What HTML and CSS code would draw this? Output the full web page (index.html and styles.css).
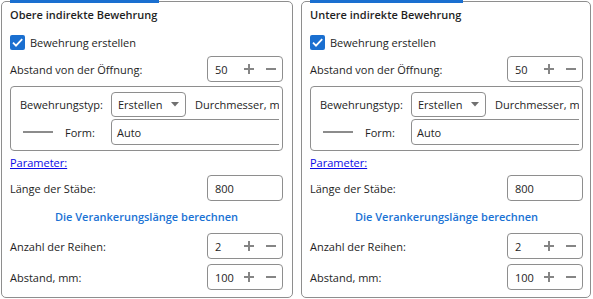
FILE: index.html
```html
<!DOCTYPE html>
<html lang="de">
<head>
<meta charset="utf-8">
<link rel="stylesheet" href="styles.css">
</head>
<body>
<div class="page">
  <section class="panel panel-left">
    <div class="title">Obere indirekte Bewehrung</div>
    <label class="check-row"><span class="checkbox"><svg width="15" height="15" viewBox="0 0 15 15"><path d="M3 7.6 6 10.6 12.2 4.2" fill="none" stroke="#fff" stroke-width="1.8"/></svg></span>Bewehrung erstellen</label>
    <div class="row"><span>Abstand von der Öffnung:</span><div class="spin"><span class="val">50</span><svg class="ico" width="10" height="10" viewBox="0 0 10 10"><path d="M5 0V10M0 5H10" stroke="#858585" stroke-width="2"/></svg><svg class="ico minus" width="10" height="10" viewBox="0 0 10 10"><path d="M0 5H10" stroke="#858585" stroke-width="2"/></svg></div></div>
    <div class="group">
      <div class="group-clip">
        <div class="grid">
          <span class="glabel">Bewehrungstyp:</span>
          <div class="select"><span>Erstellen</span><svg width="8" height="5" viewBox="0 0 8 5"><path d="M0 0H8L4 4.5Z" fill="#707070"/></svg></div>
          <span class="extra">Durchmesser, mm</span>
          <div class="form-label"><span class="line"></span><span>Form:</span></div>
          <div class="form-field">Auto</div>
        </div>
      </div>
    </div>
    <a class="link" href="#">Parameter:</a>
    <div class="row"><span>Länge der Stäbe:</span><div class="field">800</div></div>
    <div class="action">Die Verankerungslänge berechnen</div>
    <div class="row"><span>Anzahl der Reihen:</span><div class="spin"><span class="val">2</span><svg class="ico" width="10" height="10" viewBox="0 0 10 10"><path d="M5 0V10M0 5H10" stroke="#858585" stroke-width="2"/></svg><svg class="ico minus" width="10" height="10" viewBox="0 0 10 10"><path d="M0 5H10" stroke="#858585" stroke-width="2"/></svg></div></div>
    <div class="row row-last"><span>Abstand, mm:</span><div class="spin"><span class="val">100</span><svg class="ico" width="10" height="10" viewBox="0 0 10 10"><path d="M5 0V10M0 5H10" stroke="#858585" stroke-width="2"/></svg><svg class="ico minus" width="10" height="10" viewBox="0 0 10 10"><path d="M0 5H10" stroke="#858585" stroke-width="2"/></svg></div></div>
  </section>
  <section class="panel panel-right">
    <div class="title">Untere indirekte Bewehrung</div>
    <label class="check-row"><span class="checkbox"><svg width="15" height="15" viewBox="0 0 15 15"><path d="M3 7.6 6 10.6 12.2 4.2" fill="none" stroke="#fff" stroke-width="1.8"/></svg></span>Bewehrung erstellen</label>
    <div class="row"><span>Abstand von der Öffnung:</span><div class="spin"><span class="val">50</span><svg class="ico" width="10" height="10" viewBox="0 0 10 10"><path d="M5 0V10M0 5H10" stroke="#858585" stroke-width="2"/></svg><svg class="ico minus" width="10" height="10" viewBox="0 0 10 10"><path d="M0 5H10" stroke="#858585" stroke-width="2"/></svg></div></div>
    <div class="group">
      <div class="group-clip">
        <div class="grid">
          <span class="glabel">Bewehrungstyp:</span>
          <div class="select"><span>Erstellen</span><svg width="8" height="5" viewBox="0 0 8 5"><path d="M0 0H8L4 4.5Z" fill="#707070"/></svg></div>
          <span class="extra">Durchmesser, mm</span>
          <div class="form-label"><span class="line"></span><span>Form:</span></div>
          <div class="form-field">Auto</div>
        </div>
      </div>
    </div>
    <a class="link" href="#">Parameter:</a>
    <div class="row"><span>Länge der Stäbe:</span><div class="field">800</div></div>
    <div class="action">Die Verankerungslänge berechnen</div>
    <div class="row"><span>Anzahl der Reihen:</span><div class="spin"><span class="val">2</span><svg class="ico" width="10" height="10" viewBox="0 0 10 10"><path d="M5 0V10M0 5H10" stroke="#858585" stroke-width="2"/></svg><svg class="ico minus" width="10" height="10" viewBox="0 0 10 10"><path d="M0 5H10" stroke="#858585" stroke-width="2"/></svg></div></div>
    <div class="row row-last"><span>Abstand, mm:</span><div class="spin"><span class="val">100</span><svg class="ico" width="10" height="10" viewBox="0 0 10 10"><path d="M5 0V10M0 5H10" stroke="#858585" stroke-width="2"/></svg><svg class="ico minus" width="10" height="10" viewBox="0 0 10 10"><path d="M0 5H10" stroke="#858585" stroke-width="2"/></svg></div></div>
  </section>
</div>
</body>
</html>
```
FILE: styles.css
```css
* { box-sizing: border-box; }
html, body { background: #fff; }
body {
  margin: 0;
  padding: 1px 0 0 1px;
  font-family: "Open Sans", "Noto Sans", sans-serif;
  font-size: 11px;
  color: #1e1e1e;
}
.page { display: flex; gap: 8px; }
.panel {
  height: 297px;
  border: 1px solid #8e8e8e;
  border-radius: 5px;
  padding: 0 0 0 8px;
  display: flex;
  flex-direction: column;
  align-items: flex-start;
}
.panel-left { width: 292px; }
.panel-right { width: 290px; }
.panel > * { width: 273px; }

.title {
  position: relative;
  width: auto;
  height: 26px;
  line-height: 26px;
  font-weight: 600;
  color: #1f1f1f;
}
.title::before {
  content: "";
  position: absolute;
  top: -2px;
  left: 0;
  right: -2px;
  height: 3px;
  background: #1a6fd0;
}

.check-row {
  height: 28px;
  display: flex;
  align-items: center;
  gap: 5px;
}
.checkbox {
  width: 15px;
  height: 15px;
  border-radius: 2px;
  background: #1a6fd0;
  display: flex;
}

.row {
  height: 26px;
  display: flex;
  align-items: center;
  justify-content: space-between;
}
.row-last { margin-top: 5px; }

.spin, .field {
  width: 76px;
  height: 26px;
  border: 1px solid #8e8e8e;
  border-radius: 4px;
  display: flex;
  align-items: center;
  padding: 0 6px 0 7px;
}
.spin .val { flex: 1; }
.spin .minus { margin-left: 12px; }

.group {
  margin-top: 4px;
  height: 65px;
  border: 1px solid #8e8e8e;
  border-radius: 4px;
  padding: 5px 3px 0 9px;
}
.group-clip { overflow: hidden; width: 100%; }
.grid {
  display: grid;
  grid-template-columns: 91px 75px max-content;
  grid-template-rows: 25px 26px;
  row-gap: 2px;
  align-items: center;
  white-space: nowrap;
}
.select {
  height: 25px;
  border: 1px solid #8e8e8e;
  border-radius: 4px;
  display: flex;
  align-items: center;
  justify-content: space-between;
  padding: 0 6px 0 6px;
}
.extra { padding-left: 9px; }
.form-label { display: flex; align-items: center; gap: 12px; padding-left: 3px; }
.line { width: 30px; height: 2px; background: #8c8c8c; }
.form-field {
  grid-column: 2 / 4;
  width: 220px;
  height: 26px;
  border: 1px solid #8e8e8e;
  border-radius: 4px;
  display: flex;
  align-items: center;
  padding-left: 5px;
}

.link {
  height: 24px;
  line-height: 24px;
  color: #0a0ae6;
  text-decoration: underline;
}
.action {
  height: 32px;
  line-height: 32px;
  text-align: center;
  font-weight: 600;
  color: #1a72d4;
}
```
